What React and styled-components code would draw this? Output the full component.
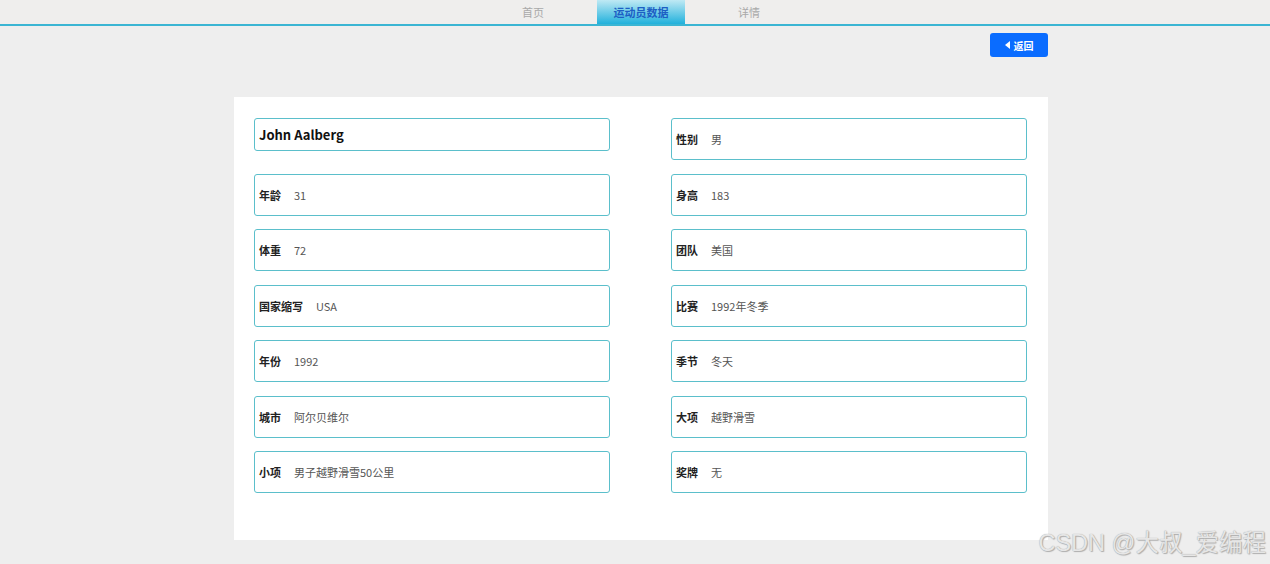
import React from 'react'
import styled, { createGlobalStyle } from 'styled-components'

const GlobalStyle = createGlobalStyle`
  html, body {
    margin: 0;
    padding: 0;
    background: #eeeeee;
    font-family: "Noto Sans CJK SC", "Noto Sans", sans-serif;
  }
  * { box-sizing: border-box; }
`

const Page = styled.div`
  width: 1270px;
  height: 564px;
  position: relative;
  overflow: hidden;
  background: #eeeeee;
`

const TopBar = styled.div`
  height: 26px;
  background: #efeeed;
  border-bottom: 2px solid #3bb5d3;
  display: flex;
  justify-content: center;
  padding-left: 12px;
  gap: 20px;
`

const Tab = styled.div`
  width: 88px;
  height: 24px;
  display: flex;
  align-items: center;
  justify-content: center;
  font-size: 11px;
  font-weight: ${p => (p.active ? 700 : 400)};
  color: ${p => (p.active ? '#1d5fc4' : '#a9a9a9')};
  background: ${p => (p.active ? 'linear-gradient(#bfe9f4, #21b1dc)' : 'transparent')};
`

const Toolbar = styled.div`
  display: flex;
  justify-content: flex-end;
  padding: 7px 222px 0 0;
  height: 71px;
`

const BackButton = styled.button`
  width: 58px;
  height: 24px;
  border: none;
  border-radius: 3px;
  background: #0a6cff;
  color: #fff;
  font-size: 10px;
  font-weight: 700;
  font-family: "Noto Sans CJK SC", "Noto Sans", sans-serif;
  display: flex;
  align-items: center;
  justify-content: center;
  gap: 3px;
  padding: 0;
`

const Card = styled.div`
  margin-left: 234px;
  width: 814px;
  height: 443px;
  background: #fff;
  padding: 21px 21px 0 20px;
  display: grid;
  grid-template-columns: 356px 356px;
  column-gap: 61px;
  row-gap: 13.5px;
  align-items: start;
  align-content: start;
`

const Field = styled.div`
  height: ${p => (p.short ? '33px' : '42px')};
  border: 1px solid #5bbfcb;
  border-radius: 3px;
  display: flex;
  align-items: center;
  padding-left: 4px;
  font-size: 11px;
`

const Name = styled.span`
  font-size: 13px;
  font-weight: 700;
  color: #111;
`

const Label = styled.span`
  font-weight: 700;
  color: #222;
  margin-right: 13px;
`

const Value = styled.span`
  color: #555;
`

const Watermark = styled.div`
  position: absolute;
  right: 4px;
  bottom: 6px;
  font-size: 23.5px;
  color: #e6e6e6;
  text-shadow: 0 0 1px #9a9a9a, 1px 1px 1px #b0b0b0;
  font-family: "Liberation Sans", "Noto Sans CJK SC", sans-serif;
`

const rows = [
  [null, ['性别', '男']],
  [['年龄', '31'], ['身高', '183']],
  [['体重', '72'], ['团队', '美国']],
  [['国家缩写', 'USA'], ['比赛', '1992年冬季']],
  [['年份', '1992'], ['季节', '冬天']],
  [['城市', '阿尔贝维尔'], ['大项', '越野滑雪']],
  [['小项', '男子越野滑雪50公里'], ['奖牌', '无']],
]

export default function App() {
  return (
    <Page>
      <GlobalStyle />
      <TopBar>
        <Tab>首页</Tab>
        <Tab active>运动员数据</Tab>
        <Tab>详情</Tab>
      </TopBar>
      <Toolbar>
        <BackButton>
          <svg width="6" height="8" viewBox="0 0 6 8"><path d="M5 0 L0 4 L5 8 Z" fill="#fff" /></svg>
          返回
        </BackButton>
      </Toolbar>
      <Card>
        {rows.map((row, i) =>
          row.map((cell, j) =>
            cell ? (
              <Field key={i + '-' + j}>
                <Label>{cell[0]}</Label>
                <Value>{cell[1]}</Value>
              </Field>
            ) : (
              <Field key={i + '-' + j} short>
                <Name>John Aalberg</Name>
              </Field>
            )
          )
        )}
      </Card>
      <Watermark>CSDN @大叔_爱编程</Watermark>
    </Page>
  )
}
